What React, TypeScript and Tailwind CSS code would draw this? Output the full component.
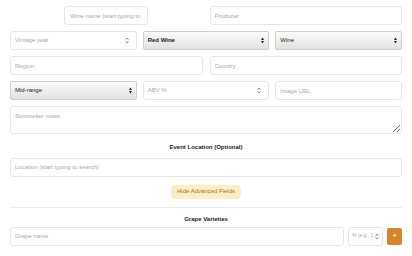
import React from 'react';

const field =
  'h-[19px] w-full rounded-[3px] border border-[#e6e6e6] bg-white px-[4px] text-[6px] text-[#333] placeholder:text-[#a8a8a8] outline-none';

const nativeSelect =
  'flex h-[19px] w-full items-center justify-between rounded-[2px] border border-[#cfcfcf] bg-gradient-to-b from-[#fbfbfb] to-[#e2e2e2] px-[4px] text-[6px] text-[#222]';

function Stepper({ className = '' }: { className?: string }) {
  return (
    <svg width="4" height="7" viewBox="0 0 4 7" className={className}>
      <path d="M0.5 2.8 L2 1 L3.5 2.8" fill="none" stroke="#777" strokeWidth="0.8" />
      <path d="M0.5 4.2 L2 6 L3.5 4.2" fill="none" stroke="#777" strokeWidth="0.8" />
    </svg>
  );
}

function SelectArrows() {
  return (
    <svg width="3" height="7" viewBox="0 0 3 7">
      <path d="M0 3 L1.5 0.6 L3 3 Z" fill="#222" />
      <path d="M0 4 L1.5 6.4 L3 4 Z" fill="#222" />
    </svg>
  );
}

function FakeSelect({ label, bold = false }: { label: string; bold?: boolean }) {
  return (
    <div className={nativeSelect}>
      <span className={bold ? 'font-semibold' : ''}>{label}</span>
      <SelectArrows />
    </div>
  );
}

function PlainSelect({ placeholder }: { placeholder: string }) {
  return (
    <div className="flex h-[19px] w-full items-center justify-between rounded-[3px] border border-[#e6e6e6] bg-white px-[4px] pr-[7px] text-[6px] text-[#a8a8a8]">
      <span>{placeholder}</span>
      <Stepper />
    </div>
  );
}

export default function App() {
  return (
    <div
      className="min-h-[256px] w-[412px] bg-white px-[10px] pt-[6px]"
      style={{ fontFamily: '"Liberation Sans", Arial, sans-serif' }}
    >
      <div className="grid grid-cols-2 gap-x-[7px]">
        <div className="flex justify-center">
          <input className={`${field} !w-[84px] !px-[5px]`} placeholder="Wine name (start typing to search)" />
        </div>
        <input className={field} placeholder="Producer" />
      </div>

      <div className="mt-[6px] grid grid-cols-3 gap-x-[6px]">
        <PlainSelect placeholder="Vintage year" />
        <FakeSelect label="Red Wine" bold />
        <FakeSelect label="Wine" />
      </div>

      <div className="mt-[6px] grid grid-cols-2 gap-x-[7px]">
        <input className={field} placeholder="Region" />
        <input className={field} placeholder="Country" />
      </div>

      <div className="mt-[6px] grid grid-cols-3 gap-x-[6px]">
        <FakeSelect label="Mid-range" />
        <PlainSelect placeholder="ABV %" />
        <input className={field} placeholder="Image URL" />
      </div>

      <textarea
        className="mt-[6px] block h-[28px] w-full resize-y rounded-[3px] border border-[#e6e6e6] bg-white px-[4px] py-[5px] text-[6px] placeholder:text-[#a8a8a8] outline-none"
        placeholder="Sommelier notes"
      />

      <div className="mt-[9px] text-center text-[6px] font-bold text-[#222]">Event Location (Optional)</div>

      <input className={`${field} mt-[4px]`} placeholder="Location (start typing to search)" />

      <div className="mt-[8px] flex justify-center">
        <button className="h-[14px] rounded-[4px] bg-[#fcefc4] px-[6px] text-[6px] text-[#a8722f]">
          Hide Advanced Fields
        </button>
      </div>

      <div className="mt-[8px] border-t border-[#ececec]" />

      <div className="mt-[7px] text-center text-[6px] font-bold text-[#222]">Grape Varieties</div>

      <div className="mt-[3px] flex items-center gap-x-[4px]">
        <input className={`${field} flex-1`} placeholder="Grape name" />
        <div className="flex h-[19px] w-[35px] shrink-0 items-center justify-between rounded-[3px] border border-[#e6e6e6] bg-white px-[3px] text-[5px] text-[#a8a8a8]">
          <span>% (e.g., 1</span>
          <Stepper />
        </div>
        <button className="flex h-[17px] w-[15px] shrink-0 items-center justify-center rounded-[2px] bg-[#d7842b] text-[8px] text-white">
          +
        </button>
      </div>
    </div>
  );
}
